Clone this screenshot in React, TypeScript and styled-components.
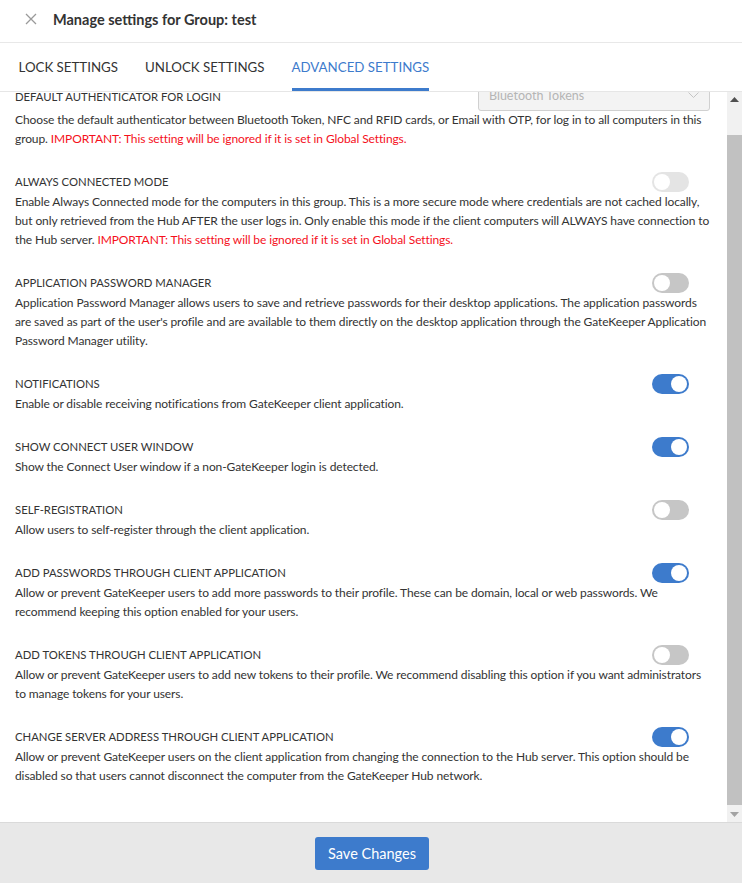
import React, { useEffect, useRef } from 'react'
import styled, { createGlobalStyle } from 'styled-components'

const FONT = "Lato, 'Open Sans', 'Noto Sans', sans-serif"

const GlobalStyle = createGlobalStyle`
  html, body {
    margin: 0;
    padding: 0;
    background: #ffffff;
  }
  body {
    font-family: ${FONT};
    color: #333333;
  }
  * {
    box-sizing: border-box;
  }
`

const Page = styled.div`
  display: flex;
  flex-direction: column;
  height: 883px;
  width: 742px;
  overflow: hidden;
`

const Header = styled.div`
  display: flex;
  align-items: center;
  height: 43px;
  padding: 0 0 4px 24px;
  border-bottom: 1px solid #e8e8e8;
  flex-shrink: 0;
`

const CloseButton = styled.button`
  display: flex;
  align-items: center;
  justify-content: center;
  width: 14px;
  height: 14px;
  padding: 0;
  margin-right: 15px;
  border: none;
  background: none;
  cursor: pointer;
`

const Title = styled.h1`
  margin: 0;
  font-size: 14.5px;
  font-weight: 700;
  color: #333333;
`

const TabBar = styled.div`
  display: flex;
  height: 49px;
  padding-left: 5px;
  border-bottom: 1px solid #e6e6e6;
  flex-shrink: 0;
`

const Tab = styled.div<{ $active?: boolean }>`
  display: flex;
  align-items: center;
  margin: 0 13.5px;
  padding-top: 2px;
  font-size: 13.3px;
  color: ${(p) => (p.$active ? '#3d7bcc' : '#333333')};
  border-bottom: 3px solid ${(p) => (p.$active ? '#3d7bcc' : 'transparent')};
  cursor: pointer;
  white-space: nowrap;
`

const Body = styled.div`
  display: flex;
  flex: 1;
  min-height: 0;
`

const Scroller = styled.div`
  flex: 1;
  overflow: hidden;
`

const Content = styled.div`
  padding: 17px 14px 40px 15px;
`

const Section = styled.div`
  margin-bottom: 23px;
`

const SectionHead = styled.div<{ $bottom?: boolean }>`
  display: flex;
  justify-content: space-between;
  align-items: ${(p) => (p.$bottom ? 'flex-end' : 'center')};
  min-height: 22px;
  margin-bottom: ${(p) => (p.$bottom ? '2.5px' : '0')};
`

const SectionTitle = styled.div`
  font-size: 11.3px;
  line-height: 22px;
  color: #333333;
  text-transform: uppercase;
`

const Description = styled.p`
  margin: -1px 0 0;
  font-size: 12px;
  letter-spacing: -0.1px;
  line-height: 19px;
  color: #333333;
`

const Warning = styled.span`
  color: #f5101c;
`

const Select = styled.div`
  display: flex;
  align-items: center;
  justify-content: space-between;
  width: 232px;
  height: 31px;
  padding: 0 10px;
  margin: 0 3px -3px 0;
  border: 1px solid #d0d0d0;
  border-radius: 3px;
  background: #f3f3f3;
  color: #b5b5b5;
  font-size: 12.5px;
`

const Toggle = styled.div<{ $on?: boolean; $disabled?: boolean }>`
  display: flex;
  align-items: center;
  justify-content: ${(p) => (p.$on ? 'flex-end' : 'flex-start')};
  width: 37px;
  height: 20px;
  padding: 2px;
  margin-right: 24px;
  border-radius: 10px;
  background: ${(p) => (p.$on ? '#3d7bcc' : p.$disabled ? '#e4e4e4' : '#c6c6c6')};
  flex-shrink: 0;
`

const Knob = styled.div`
  width: 16px;
  height: 16px;
  border-radius: 50%;
  background: #ffffff;
`

const ScrollTrack = styled.div`
  display: flex;
  flex-direction: column;
  width: 15px;
  background: #f1f1f1;
  flex-shrink: 0;
`

const ScrollArrow = styled.div`
  display: flex;
  align-items: center;
  justify-content: center;
  height: 15px;
  flex-shrink: 0;
`

const ScrollRail = styled.div`
  flex: 1;
  padding: 28px 0 2px;
  display: flex;
`

const Thumb = styled.div`
  flex: 1;
  background: #c1c1c1;
`

const Footer = styled.div`
  display: flex;
  align-items: center;
  justify-content: center;
  height: 61px;
  padding-left: 2px;
  background: #e8e8e8;
  border-top: 1px solid #dadada;
  flex-shrink: 0;
`

const SaveButton = styled.button`
  width: 114px;
  height: 33px;
  padding: 0;
  border: none;
  border-radius: 3px;
  background: #3d7bcc;
  color: #ffffff;
  font-family: ${FONT};
  font-size: 14.5px;
  cursor: pointer;
`

type Setting = {
  title: string
  text: string
  warning?: boolean
  on?: boolean
  disabled?: boolean
}

const WARNING = 'IMPORTANT: This setting will be ignored if it is set in Global Settings.'

const settings: Setting[] = [
  {
    title: 'Always Connected Mode',
    text:
      'Enable Always Connected mode for the computers in this group. This is a more secure mode where credentials are not cached locally, but only retrieved from the Hub AFTER the user logs in. Only enable this mode if the client computers will ALWAYS have connection to the Hub server.',
    warning: true,
    disabled: true,
  },
  {
    title: 'Application Password Manager',
    text:
      "Application Password Manager allows users to save and retrieve passwords for their desktop applications. The application passwords are saved as part of the user's profile and are available to them directly on the desktop application through the GateKeeper Application Password Manager utility.",
  },
  {
    title: 'Notifications',
    text: 'Enable or disable receiving notifications from GateKeeper client application.',
    on: true,
  },
  {
    title: 'Show Connect User Window',
    text: 'Show the Connect User window if a non-GateKeeper login is detected.',
    on: true,
  },
  {
    title: 'Self-Registration',
    text: 'Allow users to self-register through the client application.',
  },
  {
    title: 'Add Passwords Through Client Application',
    text:
      'Allow or prevent GateKeeper users to add more passwords to their profile. These can be domain, local or web passwords. We recommend keeping this option enabled for your users.',
    on: true,
  },
  {
    title: 'Add Tokens Through Client Application',
    text:
      'Allow or prevent GateKeeper users to add new tokens to their profile. We recommend disabling this option if you want administrators to manage tokens for your users.',
  },
  {
    title: 'Change Server Address Through Client Application',
    text:
      'Allow or prevent GateKeeper users on the client application from changing the connection to the Hub server. This option should be disabled so that users cannot disconnect the computer from the GateKeeper Hub network.',
    on: true,
  },
]

const App: React.FC = () => {
  const scrollRef = useRef<HTMLDivElement>(null)

  useEffect(() => {
    if (scrollRef.current) scrollRef.current.scrollTop = 29
  }, [])

  return (
    <>
      <GlobalStyle />
      <Page>
        <Header>
          <CloseButton aria-label="Close">
            <svg width="12" height="12" viewBox="0 0 12 12">
              <path d="M1 1 L11 11 M11 1 L1 11" stroke="#9a9a9a" strokeWidth="1.3" fill="none" />
            </svg>
          </CloseButton>
          <Title>Manage settings for Group: test</Title>
        </Header>

        <TabBar>
          <Tab>LOCK SETTINGS</Tab>
          <Tab>UNLOCK SETTINGS</Tab>
          <Tab $active>ADVANCED SETTINGS</Tab>
        </TabBar>

        <Body>
          <Scroller ref={scrollRef}>
            <Content>
              <Section>
                <SectionHead $bottom>
                  <SectionTitle>Default Authenticator for Login</SectionTitle>
                  <Select>
                    <span>Bluetooth Tokens</span>
                    <svg width="11" height="7" viewBox="0 0 11 7">
                      <path d="M0.5 0.5 L5.5 5.5 L10.5 0.5" stroke="#c4c4c4" strokeWidth="1" fill="none" />
                    </svg>
                  </Select>
                </SectionHead>
                <Description>
                  Choose the default authenticator between Bluetooth Token, NFC and RFID cards, or Email with OTP, for log in
                  to all computers in this group. <Warning>{WARNING}</Warning>
                </Description>
              </Section>

              {settings.map((s) => (
                <Section key={s.title}>
                  <SectionHead>
                    <SectionTitle>{s.title}</SectionTitle>
                    <Toggle $on={s.on} $disabled={s.disabled}>
                      <Knob />
                    </Toggle>
                  </SectionHead>
                  <Description>
                    {s.text}
                    {s.warning && (
                      <>
                        {' '}
                        <Warning>{WARNING}</Warning>
                      </>
                    )}
                  </Description>
                </Section>
              ))}
            </Content>
          </Scroller>

          <ScrollTrack>
            <ScrollArrow>
              <svg width="9" height="5" viewBox="0 0 9 5">
                <path d="M0 5 L4.5 0 L9 5 Z" fill="#505050" />
              </svg>
            </ScrollArrow>
            <ScrollRail>
              <Thumb />
            </ScrollRail>
            <ScrollArrow>
              <svg width="9" height="5" viewBox="0 0 9 5">
                <path d="M0 0 L4.5 5 L9 0 Z" fill="#a3a3a3" />
              </svg>
            </ScrollArrow>
          </ScrollTrack>
        </Body>

        <Footer>
          <SaveButton>Save Changes</SaveButton>
        </Footer>
      </Page>
    </>
  )
}

export default App
